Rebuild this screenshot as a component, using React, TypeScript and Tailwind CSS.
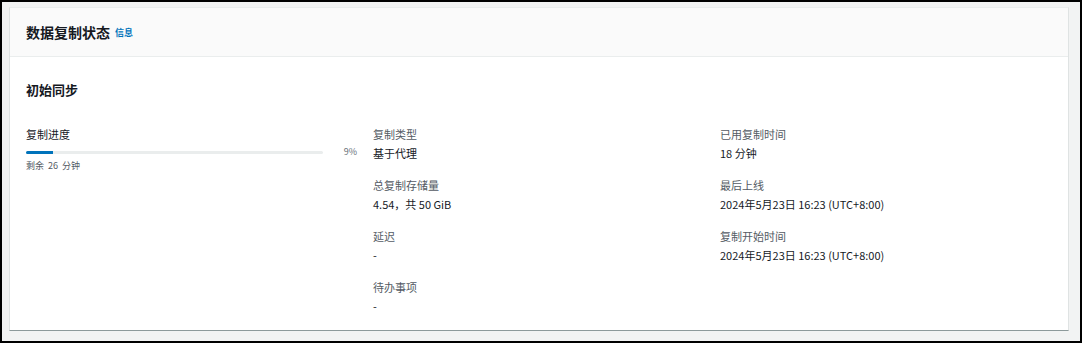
import React from "react";

const font = { fontFamily: '"Noto Sans CJK SC", "Noto Sans", sans-serif' };

function Item({ label, value }: { label: string; value: string }) {
  return (
    <div>
      <div className="text-[11px] leading-[19px] text-[#545b64]">{label}</div>
      <div className="text-[11px] leading-[19px] text-[#16191f]">{value}</div>
    </div>
  );
}

export default function App() {
  return (
    <div
      className="w-[1082px] h-[343px] border-2 border-black bg-[#f2f3f3] overflow-hidden"
      style={font}
    >
      <div className="ml-[7px] mt-[5px] w-[1060px] h-[324px] bg-white border border-[#dfe3e3] border-b-[#8d9a9b] border-t-[#eaeded]">
        <div className="h-[49px] bg-[#fafafa] border-b border-[#eaeded] flex items-center px-[16px] gap-[5px]">
          <span className="text-[14px] font-bold text-[#16191f] leading-[20px]">数据复制状态</span>
          <span className="text-[9px] font-bold text-[#0073bb] leading-[20px] mt-[1px]">信息</span>
        </div>
        <div className="px-[16px] pt-[24px]">
          <div className="text-[13px] font-bold text-[#16191f] leading-[18px]">初始同步</div>
          <div className="grid grid-cols-[331px_331px_331px] gap-x-[16px] mt-[26px]">
            <div>
              <div className="text-[11px] leading-[19px] text-[#16191f]">复制进度</div>
              <div className="flex items-center h-[14px] mt-[1px]">
                <div className="w-[297px] h-[3px] bg-[#eaeded] rounded-full overflow-hidden">
                  <div className="h-full bg-[#0073bb]" style={{ width: "9%" }} />
                </div>
                <span className="ml-auto text-[9px] text-[#687078] leading-[14px]">9%</span>
              </div>
              <div className="text-[9px] leading-[14px] text-[#545b64] whitespace-pre">剩余  26  分钟</div>
            </div>
            <div className="flex flex-col gap-[13px]">
              <Item label="复制类型" value="基于代理" />
              <Item label="总复制存储量" value="4.54，共 50 GiB" />
              <Item label="延迟" value="-" />
              <Item label="待办事项" value="-" />
            </div>
            <div className="flex flex-col gap-[13px]">
              <Item label="已用复制时间" value="18 分钟" />
              <Item label="最后上线" value="2024年5月23日 16:23 (UTC+8:00)" />
              <Item label="复制开始时间" value="2024年5月23日 16:23 (UTC+8:00)" />
            </div>
          </div>
        </div>
      </div>
    </div>
  );
}
